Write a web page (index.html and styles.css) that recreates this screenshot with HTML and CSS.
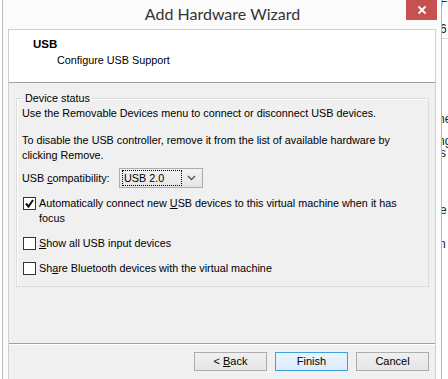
FILE: index.html
```html
<!DOCTYPE html>
<html>
<head>
<meta charset="utf-8">
<link rel="stylesheet" href="styles.css">
</head>
<body>
<div class="screen">
  <div class="bg-left"></div>
  <div class="window">
    <div class="titlebar">
      <span></span>
      <span class="title">Add Hardware Wizard</span>
      <div class="close"><svg width="10" height="10" viewBox="0 0 10 10"><path d="M1.5 1.5 L8.5 8.5 M8.5 1.5 L1.5 8.5" stroke="#fff" stroke-width="1.8"/></svg></div>
    </div>
    <div class="client">
      <div class="header">
        <div class="h-title">USB</div>
        <div class="h-sub">Configure USB Support</div>
      </div>
      <div class="body">
        <fieldset class="group">
          <legend>Device status</legend>
          <p class="text">Use the Removable Devices menu to connect or disconnect USB devices.</p>
          <p class="text para">To disable the USB controller, remove it from the list of available hardware by<br>clicking Remove.</p>
          <div class="compat">
            <span class="compat-label">USB <u>c</u>ompatibility:</span>
            <div class="combo">
              <span class="combo-val">USB 2.0</span>
              <svg class="chev" width="9" height="6" viewBox="0 0 9 6"><path d="M1 1 L4.5 4.5 L8 1" fill="none" stroke="#555" stroke-width="1.4"/></svg>
            </div>
          </div>
          <div class="check first">
            <span class="box"><svg width="11" height="11" viewBox="0 0 11 11"><path d="M2 5.5 L4.5 8.5 L9 2" fill="none" stroke="#111" stroke-width="2"/></svg></span>
            <span class="check-text">Automatically connect new <u>U</u>SB devices to this virtual machine when it has<br>focus</span>
          </div>
          <div class="check">
            <span class="box"></span>
            <span class="check-text"><u>S</u>how all USB input devices</span>
          </div>
          <div class="check">
            <span class="box"></span>
            <span class="check-text">Sh<u>a</u>re Bluetooth devices with the virtual machine</span>
          </div>
        </fieldset>
      </div>
      <div class="footer">
        <button class="btn">&lt; <u>B</u>ack</button>
        <button class="btn default">Finish</button>
        <button class="btn">Cancel</button>
      </div>
    </div>
  </div>
  <div class="bg-right">
    <div class="frag f1">F</div>
    <div class="frag f2">6</div>
    <div class="rule"></div>
    <div class="frag f3">ne</div>
    <div class="frag f4">ng</div>
    <div class="frag f5">s</div>
    <div class="frag f6">e</div>
    <div class="frag f7">n</div>
  </div>
</div>
</body>
</html>
```
FILE: styles.css
```css
* { box-sizing: border-box; }
html, body { margin: 0; padding: 0; }
body {
  width: 448px;
  height: 379px;
  overflow: hidden;
  background: #fff;
  font-family: "Liberation Sans", Arial, sans-serif;
  font-size: 10.8px;
  color: #000;
}
.screen {
  display: flex;
  height: 379px;
}
.bg-left {
  width: 2px;
  background: #fff;
}
.window {
  width: 440px;
  height: 379px;
  background: #fbfbfb;
  border-left: 1px solid #b9b9b9;
  border-right: 1px solid #b9b9b9;
  display: flex;
  flex-direction: column;
  padding: 0 5px 0 5px;
}
.titlebar {
  height: 29px;
  display: grid;
  grid-template-columns: 1fr auto 1fr;
  align-items: start;
  margin: 0 -1px 0 0;
}
.title {
  font-family: Lato, "Liberation Sans", sans-serif;
  font-size: 16px;
  color: #333;
  line-height: 29px;
  margin-top: -1px;
  white-space: nowrap;
}
.close {
  justify-self: end;
  width: 31px;
  height: 20px;
  background: #c75050;
  display: flex;
  align-items: center;
  justify-content: center;
}
.client {
  flex: 1;
  border: 1px solid #d0d0d0;
  border-bottom: none;
  background: #f0f0f0;
  display: flex;
  flex-direction: column;
}
.header {
  background: #fff;
  height: 53px;
  border-bottom: 1px solid #a0a0a0;
  padding: 6px 0 0 24px;
  line-height: 16px;
}
.h-title { font-weight: bold; font-size: 11.5px; }
.h-sub { padding-left: 24px; }
.body {
  flex: 1;
  padding: 8px 6px 0 7px;
}
.group {
  margin: 0;
  padding: 0 0 10px 5px;
  border: 1px solid #dcdcdc;
  box-shadow: inset 1px 1px 0 #fff;
  min-width: 0;
  white-space: nowrap;
}
.group legend {
  padding: 0 2px;
  margin-left: 1px;
  line-height: 15px;
  color: #000;
}
.text {
  margin: 0;
  line-height: 15px;
}
.para { margin-top: 12px; }
.compat {
  display: flex;
  align-items: center;
  margin-top: 5px;
}
.compat-label { width: 97px; }
.combo {
  width: 84px;
  height: 20px;
  border: 1px solid #acacac;
  background: linear-gradient(#f2f2f2, #e5e5e5);
  display: flex;
  align-items: center;
  justify-content: space-between;
  padding: 0 6px 0 2px;
}
.combo-val {
  border: 1px dotted #000;
  line-height: 14px;
  padding: 0 17px 0 1px;
  height: 16px;
}
.check {
  display: flex;
  align-items: flex-start;
  margin-top: 10px;
  line-height: 15px;
}
.check.first { margin-top: 8px; }
.box {
  width: 13px;
  height: 13px;
  border: 1px solid #333;
  background: #fff;
  margin: 1px 3px 0 1px;
  flex: none;
  display: flex;
  align-items: center;
  justify-content: center;
}
.footer {
  height: 36px;
  border-top: 1px solid #a0a0a0;
  box-shadow: inset 0 1px 0 #fff;
  display: flex;
  justify-content: flex-end;
  gap: 8px;
  padding: 8px 6px 0 0;
}
.btn {
  font: inherit;
  font-size: 11px;
  width: 73px;
  height: 19px;
  border: 1px solid #acacac;
  background: linear-gradient(#f0f0f0, #e5e5e5);
  color: #000;
  padding: 0;
  line-height: 15px;
}
.btn.default {
  border-color: #3c9fe0;
  background: linear-gradient(#ecf4fc, #dcecfc);
}
.bg-right {
  flex: 1;
  overflow: hidden;
  background: #fff;
  font-size: 12px;
  color: #222;
}
.frag {
  margin-left: -2px;
  line-height: 14px;
  white-space: nowrap;
}
.f1 { margin-top: -5px; }
.f2 { margin-top: 13px; }
.rule { height: 1px; background: #d8d8d8; margin-top: 2px; }
.f3 { margin-top: 73px; margin-left: -4px; }
.f4 { margin-top: 9px; margin-left: -4px; line-height: 12px; }
.f5 { margin-top: 0; line-height: 12px; }
.f6 { margin-top: 44px; }
.f7 { margin-top: 20px; margin-left: -3px; }
```
